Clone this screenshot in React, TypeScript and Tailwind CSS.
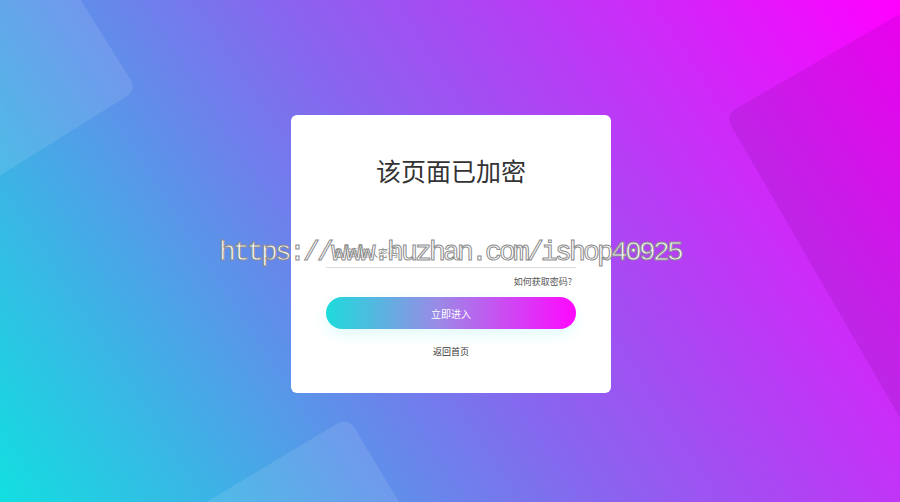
import React from 'react';
import { Lock } from 'lucide-react';

const cjk = '[font-family:"Noto_Sans_CJK_SC","Noto_Sans",sans-serif]';

const Backdrop: React.FC = () => (
  <svg className="absolute inset-0 w-full h-full" viewBox="0 0 900 502" preserveAspectRatio="none">
    <rect x="-420" y="-420" width="420" height="420" rx="12" fill="#ffffff" fillOpacity="0.1" transform="translate(137 90) rotate(-32)" />
    <rect x="0" y="0" width="420" height="420" rx="12" fill="#ffffff" fillOpacity="0.1" transform="translate(348 417) rotate(59)" />
    <rect x="0" y="0" width="420" height="420" rx="12" fill="#3a0050" fillOpacity="0.1" transform="translate(725 115) rotate(-30)" />
  </svg>
);

export default function App() {
  return (
    <div className={`relative w-full h-[502px] overflow-hidden bg-[linear-gradient(57deg,#12dfe0_0%,#8a63ef_50%,#ff00ff_100%)] ${cjk}`}>
      <Backdrop />

      <div className="relative h-full flex items-center justify-center pt-[6px] pl-[2px]">
        <div className="w-[320px] bg-white rounded-[6px] pt-[40px] px-[35px] pb-[34px] flex flex-col">
          <h1 className="h-[30px] text-center text-[25px] leading-[30px] text-[#333]">该页面已加密</h1>

          <div className="mt-[53px] h-[30px] flex items-center gap-[5px] pl-[7px] border-b border-[#dcdcdc]">
            <Lock className="w-[10px] h-[10px] text-[#777]" strokeWidth={2.5} />
            <input
              type="password"
              placeholder="请输入密码"
              className="flex-1 bg-transparent outline-none text-[10px] text-[#555] placeholder:text-[#888]"
            />
          </div>

          <div className="mt-[7px] text-right text-[9px] leading-[14px] text-[#555] pr-[4px]">如何获取密码?</div>

          <button className="mt-[8px] h-[32px] rounded-full bg-[linear-gradient(90deg,#1ddbdb,#9b8ae6_45%,#ff08ff)] text-white text-[10px] shadow-[0_6px_14px_rgba(60,220,235,0.15)]">
            立即进入
          </button>

          <div className="mt-[16px] text-center text-[9px] leading-[14px] text-[#333]">返回首页</div>
        </div>
      </div>

      <div className="absolute left-0 right-0 top-[236px] text-center pointer-events-none">
        <span className="[font-family:'Liberation_Mono',monospace] text-[28px] leading-[34px] tracking-[-2.8px] text-white [-webkit-text-stroke:1px_#8c8c8c]">
          https://www.huzhan.com/ishop40925
        </span>
      </div>
    </div>
  );
}
